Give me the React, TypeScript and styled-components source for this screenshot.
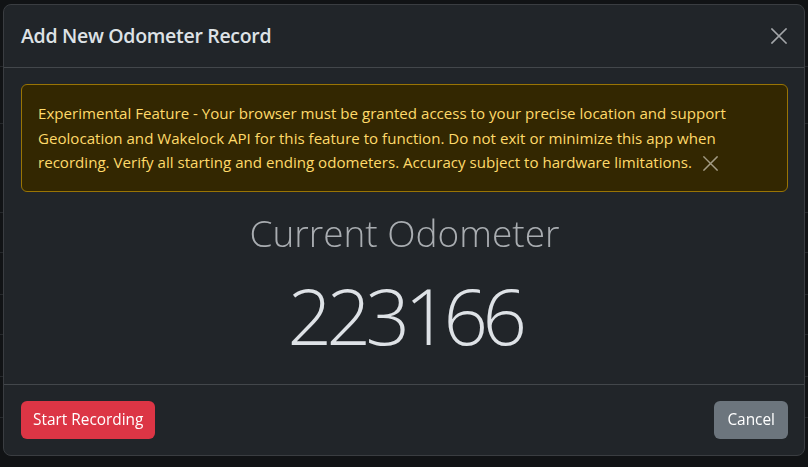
import React from "react";
import styled, { createGlobalStyle } from "styled-components";

const Global = createGlobalStyle`
  html, body { margin: 0; padding: 0; background: #111315; }
  body { font-family: "Open Sans", "Noto Sans", sans-serif; color: #dee2e6; }
  * { box-sizing: border-box; }
`;

const Page = styled.div`
  width: 808px;
  height: 467px;
  overflow: hidden;
  background: #111315;
`;

const PageRows = styled.div`
  display: flex;
  flex-direction: column;
  padding-top: 66px;
`;

const PageRow = styled.div<{ $h: number }>`
  height: ${(p) => p.$h}px;
  border-top: 1px solid #25282b;
`;

const Modal = styled.div`
  position: fixed;
  top: 4px;
  left: 3px;
  width: 802px;
  display: flex;
  flex-direction: column;
  background: #212529;
  border: 1px solid #3a3d41;
  border-radius: 8px;
`;

const Header = styled.div`
  display: flex;
  align-items: center;
  justify-content: space-between;
  padding: 16px 16px 16px 17px;
  border-bottom: 1px solid #43474b;
`;

const Title = styled.h5`
  margin: 0;
  font-size: 19.5px;
  font-weight: 600;
  line-height: 30px;
  color: #dee2e6;
  letter-spacing: -0.3px;
`;

const CloseBtn = styled.button<{ $size: number; $gap?: number }>`
  display: inline-flex;
  align-items: center;
  justify-content: center;
  width: ${(p) => p.$size}px;
  height: ${(p) => p.$size}px;
  margin-left: ${(p) => p.$gap ?? 0}px;
  padding: 0;
  border: 0;
  background: transparent;
  cursor: pointer;
  vertical-align: middle;
`;

const Body = styled.div`
  display: flex;
  flex-direction: column;
  align-items: center;
  padding: 16px 16px 21px 17px;
`;

const Alert = styled.div`
  align-self: stretch;
  padding: 16px 16px;
  background: #332701;
  border: 1px solid #997404;
  border-radius: 6px;
  color: #ffda6a;
  font-size: 15.1px;
  line-height: 24.5px;
`;

const Heading = styled.div`
  margin-top: 19px;
  font-size: 37px;
  font-weight: 300;
  line-height: 44px;
  color: #a9adb1;
`;

const Reading = styled.div`
  margin-top: 12px;
  font-size: 78px;
  font-weight: 300;
  line-height: 96px;
  color: #dee2e6;
  letter-spacing: -5.5px;
`;

const Footer = styled.div`
  display: flex;
  justify-content: space-between;
  align-items: center;
  padding: 16px 16px 16px 17px;
  border-top: 1px solid #43474b;
`;

const Button = styled.button<{ $variant: "danger" | "secondary" }>`
  height: 38px;
  padding: 0 ${(p) => (p.$variant === "danger" ? 12 : 13)}px;
  border: 0;
  border-radius: 6px;
  font-family: "Open Sans", "Noto Sans", sans-serif;
  font-size: 15.4px;
  color: #fff;
  background: ${(p) => (p.$variant === "danger" ? "#dc3545" : "#6c757d")};
`;

const XIcon = ({ size, color, stroke }: { size: number; color: string; stroke: number }) => (
  <svg width={size} height={size} viewBox="0 0 16 16" fill="none">
    <path d="M1 1L15 15M15 1L1 15" stroke={color} strokeWidth={stroke} strokeLinecap="square" />
  </svg>
);

export default function App() {
  return (
    <Page>
      <Global />
      <PageRows>
        {[57, 89, 40, 42, 40, 42, 41, 40].map((h, i) => (
          <PageRow key={i} $h={h} />
        ))}
      </PageRows>
      <Modal>
        <Header>
          <Title>Add New Odometer Record</Title>
          <CloseBtn $size={18}>
            <XIcon size={16} color="#a3a6a9" stroke={1.6} />
          </CloseBtn>
        </Header>
        <Body>
          <Alert>
            Experimental Feature - Your browser must be granted access to your precise location and support
            Geolocation and Wakelock API for this feature to function. Do not exit or minimize this app when
            recording. Verify all starting and ending odometers. Accuracy subject to hardware limitations.{" "}
            <CloseBtn $size={22} $gap={4}>
              <XIcon size={15} color="#a39b84" stroke={1.6} />
            </CloseBtn>
          </Alert>
          <Heading>Current Odometer</Heading>
          <Reading>223166</Reading>
        </Body>
        <Footer>
          <Button $variant="danger">Start Recording</Button>
          <Button $variant="secondary">Cancel</Button>
        </Footer>
      </Modal>
    </Page>
  );
}
